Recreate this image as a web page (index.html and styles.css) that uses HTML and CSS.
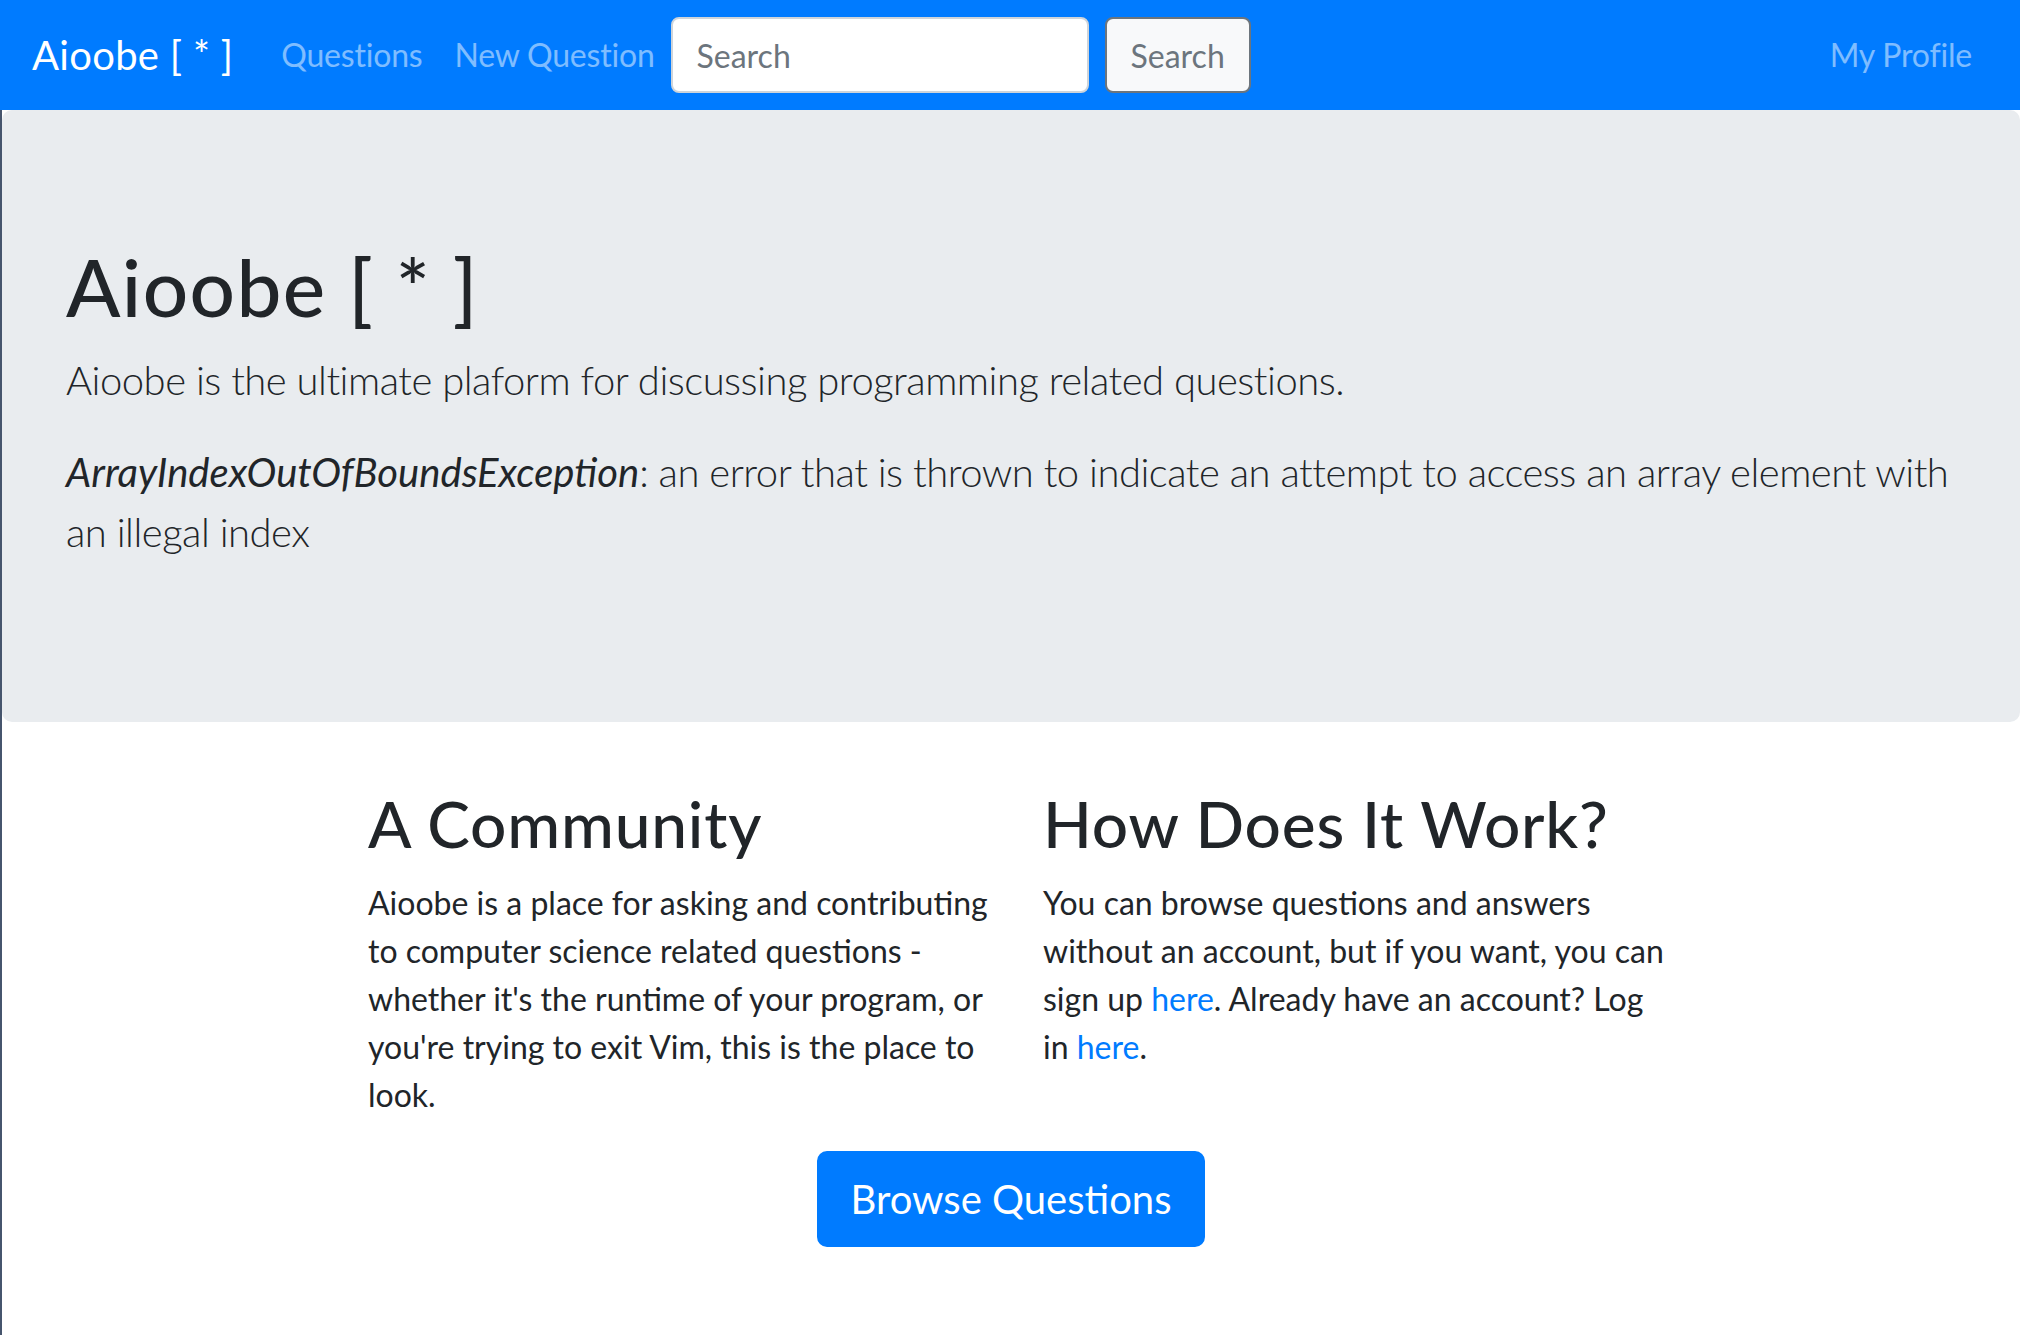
FILE: index.html
```html
<!DOCTYPE html>
<html lang="en">
<head>
<meta charset="utf-8">
<title>Aioobe [ * ]</title>
<link rel="stylesheet" href="styles.css">
</head>
<body>
<nav class="navbar">
  <a class="brand" href="#">Aioobe [ * ]</a>
  <a class="nav-link" href="#">Questions</a>
  <a class="nav-link" href="#">New Question</a>
  <form class="search-form">
    <input class="search-input" type="text" placeholder="Search">
    <button class="search-btn" type="button">Search</button>
  </form>
  <a class="nav-link profile" href="#">My Profile</a>
</nav>
<main class="page">
  <section class="jumbotron">
    <h1 class="jumbo-title">Aioobe [ * ]</h1>
    <p class="lead">Aioobe is the ultimate plaform for discussing programming related questions.</p>
    <p class="lead"><em class="term">ArrayIndexOutOfBoundsException</em>: an error that is thrown to indicate an attempt to access an array element with an illegal index</p>
  </section>
  <section class="features">
    <div class="feature">
      <h2 class="feature-title">A Community</h2>
      <p class="feature-text">Aioobe is a place for asking and contributing to computer science related questions - whether it's the runtime of your program, or you're trying to exit Vim, this is the place to look.</p>
    </div>
    <div class="feature">
      <h2 class="feature-title">How Does It Work?</h2>
      <p class="feature-text">You can browse questions and answers without an account, but if you want, you can sign up <a class="link" href="#">here</a>. Already have an account? Log in <a class="link" href="#">here</a>.</p>
    </div>
  </section>
  <div class="cta">
    <a class="btn-primary" href="#">Browse Questions</a>
  </div>
</main>
</body>
</html>
```
FILE: styles.css
```css
* { box-sizing: border-box; }
html, body { margin: 0; padding: 0; }
body {
  font-family: Lato, "Open Sans", sans-serif;
  color: #212529;
  background: #fff;
  font-size: 32px;
  line-height: 1.5;
  width: 2020px;
  height: 1335px;
  overflow: hidden;
}
a { text-decoration: none; }

.navbar {
  display: flex;
  align-items: center;
  height: 110px;
  padding: 0 32px;
  background: #007bff;
}
.brand {
  font-size: 40px;
  line-height: 60px;
  color: #fff;
  margin-right: 32px;
  letter-spacing: 0.3px;
}
.nav-link {
  font-size: 32px;
  line-height: 48px;
  padding: 0 16px;
  letter-spacing: -0.2px;
  color: rgba(255,255,255,.5);
}
.search-form {
  display: flex;
  align-items: center;
}
.search-input {
  width: 418px;
  height: 76px;
  margin-right: 16px;
  padding: 0 24px;
  border: 2px solid #ced4da;
  border-radius: 8px;
  font-family: inherit;
  font-size: 32px;
  color: #495057;
  background: #fff;
}
.search-input::placeholder { color: #6c757d; opacity: 1; }
.search-btn {
  height: 76px;
  padding: 0 24px;
  border: 2px solid #6c757d;
  border-radius: 8px;
  background: #f8f9fa;
  color: #6c757d;
  font-family: inherit;
  font-size: 32px;
}
.profile { margin-left: auto; }

.page {
  border-left: 2px solid #46556d;
  min-height: 1225px;
}
.jumbotron {
  background: #e9ecef;
  border-radius: 10px;
  padding: 128px 64px;
  margin-bottom: 64px;
}
.jumbo-title {
  font-size: 80px;
  font-weight: 500;
  line-height: 1.2;
  letter-spacing: 1.4px;
  margin: 0 0 16px;
}
.lead {
  font-size: 40px;
  font-weight: 300;
  line-height: 60px;
  letter-spacing: -0.5px;
  margin: 0 0 32px;
}
.term { font-weight: 400; letter-spacing: 0; }

.features {
  display: grid;
  grid-template-columns: 630px 630px;
  column-gap: 45px;
  padding-left: 366px;
}
.feature-title {
  font-size: 64px;
  font-weight: 500;
  line-height: 1.2;
  letter-spacing: 0.8px;
  margin: 0 0 16px;
}
.feature-text {
  margin: 0 0 32px;
  font-size: 32px;
  line-height: 48px;
}
.link { color: #007bff; }

.cta {
  display: flex;
  justify-content: center;
}
.btn-primary {
  display: inline-block;
  background: #007bff;
  color: #fff;
  border: 2px solid #007bff;
  border-radius: 10px;
  padding: 16px 32px;
  font-size: 40px;
  line-height: 60px;
}
```
